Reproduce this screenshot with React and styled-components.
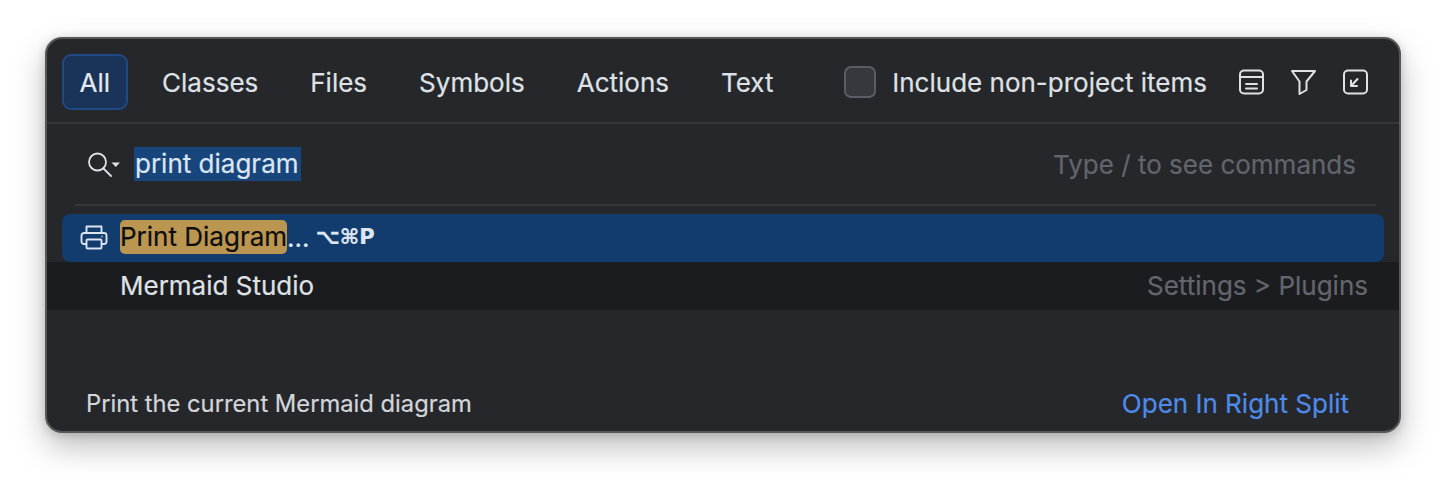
import React from 'react';
import styled, { createGlobalStyle } from 'styled-components';

const GlobalStyle = createGlobalStyle`
    html, body {
        margin: 0;
        background: #fff;
    }
    body {
        font-family: Inter, "Liberation Sans", sans-serif;
    }
`

const Page = styled.div`
    width: 1446px;
    height: 486px;
    box-sizing: border-box;
    padding: 37px 45px 53px;
    overflow: hidden;
`

const Popup = styled.div`
    height: 396px;
    box-sizing: border-box;
    display: flex;
    flex-direction: column;
    background: #25272b;
    border: 2px solid #56575a;
    border-radius: 17px;
    box-shadow: 0 14px 32px rgba(0, 0, 0, 0.26), 0 2px 10px rgba(0, 0, 0, 0.16);
    color: #dfe1e5;
    font-size: 26px;
    -webkit-text-stroke: 0.2px currentColor;
    overflow: hidden;
`

const TabBar = styled.div`
    height: 85px;
    flex: none;
    box-sizing: border-box;
    display: flex;
    align-items: center;
    padding: 3px 31px 0 15px;
    border-bottom: 2px solid #35373b;
`

const Tab = styled.div`
    height: 56px;
    box-sizing: border-box;
    display: flex;
    align-items: center;
    padding: 0 15.5px;
    margin-right: 17px;
    border-radius: 9px;
    border: 2px solid ${p => (p.$active ? '#1f4a86' : 'transparent')};
    background: ${p => (p.$active ? '#1a3358' : 'transparent')};
    color: ${p => (p.$active ? '#e6e8ec' : '#dfe1e5')};
`

const CheckBox = styled.div`
    width: 32px;
    height: 32px;
    box-sizing: border-box;
    margin-left: auto;
    border: 2px solid #5a5d63;
    border-radius: 7px;
    background: #36383d;
`

const CheckLabel = styled.span`
    margin-left: 16px;
    margin-right: 32px;
`

const IconGroup = styled.div`
    display: flex;
    align-items: center;
    gap: 27px;
`

const ToolIcon = styled.svg`
    width: 25px;
    height: 26px;
    fill: none;
    stroke: #dfe1e5;
    stroke-width: 2;
    stroke-linejoin: round;
    stroke-linecap: round;
`

const SearchRow = styled.div`
    height: 80px;
    flex: none;
    box-sizing: border-box;
    display: flex;
    align-items: center;
    padding: 0 43px 0 41px;
`

const SearchIcon = styled.svg`
    width: 32px;
    height: 26px;
    margin-right: 14px;
    fill: none;
    stroke: #dfe1e5;
    stroke-width: 1.8;
    stroke-linecap: round;
`

const Query = styled.span`
    height: 34px;
    line-height: 34px;
    padding: 0 2px 0 1px;
    background: #17457c;
    color: #dce6f2;
`

const Hint = styled.span`
    margin-left: auto;
    color: #62656b;
`

const Rule = styled.div`
    height: 2px;
    flex: none;
    margin: 0 23px 0 28px;
    background: #35373b;
`

const Results = styled.div`
    padding-top: 8px;
    display: flex;
    flex-direction: column;
`

const SelectedRow = styled.div`
    height: 48px;
    margin: 0 15px;
    box-sizing: border-box;
    display: flex;
    align-items: center;
    padding: 0 0 2px 18px;
    border-radius: 8px;
    background: #123b6e;
    color: #dfe6f0;
`

const PrinterIcon = styled.svg`
    width: 28px;
    height: 26px;
    margin-right: 12px;
    fill: none;
    stroke: #dce4ee;
    stroke-width: 1.9;
    stroke-linejoin: round;
`

const Match = styled.span`
    height: 34px;
    line-height: 34px;
    border-radius: 5px;
    background: #bb9650;
    color: #0d0d0d;
`

const Shortcut = styled.span`
    margin-left: 6px;
    font-family: "DejaVu Sans", sans-serif;
    font-size: 21px;
    font-weight: 700;
`

const PluginRow = styled.div`
    height: 48px;
    box-sizing: border-box;
    display: flex;
    align-items: center;
    justify-content: space-between;
    padding: 0 31px 2px 73px;
    background: #1b1c1f;
`

const Location = styled.span`
    color: #63666c;
`

const Footer = styled.div`
    margin-top: auto;
    height: 56px;
    flex: none;
    box-sizing: border-box;
    display: flex;
    align-items: center;
    justify-content: space-between;
    padding: 0 50px 0 39px;
`

const Description = styled.span`
    font-size: 23.75px;
    color: #d3d5da;
`

const OpenLink = styled.span`
    color: #4f8be8;
`

const tabs = ['All', 'Classes', 'Files', 'Symbols', 'Actions', 'Text'];

const App = () => {
    return (
        <Page>
            <GlobalStyle />
            <Popup>
                <TabBar>
                    {tabs.map((t, i) => (
                        <Tab key={t} $active={i === 0}>{t}</Tab>
                    ))}
                    <CheckBox />
                    <CheckLabel>Include non-project items</CheckLabel>
                    <IconGroup>
                        <ToolIcon viewBox="0 0 25 26">
                            <rect x="1" y="1.5" width="23" height="23" rx="4" />
                            <path d="M1 8h23M7 15h11M7 19.5h11" />
                        </ToolIcon>
                        <ToolIcon viewBox="0 0 25 26">
                            <path d="M1 2h23l-8.5 10.5V21l-7 4V12.5z" />
                        </ToolIcon>
                        <ToolIcon viewBox="0 0 25 26">
                            <rect x="1" y="1.5" width="23" height="23" rx="4" />
                            <path d="M14.5 10L8 17M8 11.5V17h6" />
                        </ToolIcon>
                    </IconGroup>
                </TabBar>
                <SearchRow>
                    <SearchIcon viewBox="0 0 32 26">
                        <circle cx="9.5" cy="11" r="8.5" />
                        <path d="M15.5 17.5L23 25" />
                        <path d="M23.5 11.5h8.5l-4.25 4.5z" fill="#dfe1e5" stroke="none" />
                    </SearchIcon>
                    <Query>print diagram</Query>
                    <Hint>Type / to see commands</Hint>
                </SearchRow>
                <Rule />
                <Results>
                    <SelectedRow>
                        <PrinterIcon viewBox="0 0 28 26">
                            <path d="M6.5 9V2.5h15V9" />
                            <path d="M6.5 20H4a2.5 2.5 0 0 1-2.5-2.5v-6A2.5 2.5 0 0 1 4 9h20a2.5 2.5 0 0 1 2.5 2.5v6A2.5 2.5 0 0 1 24 20h-2.5" />
                            <rect x="6.5" y="15.5" width="15" height="9" rx="1" />
                            <path d="M21.5 12.5h1" />
                        </PrinterIcon>
                        <Match>Print Diagram</Match>
                        <span>...</span>
                        <Shortcut>⌥⌘P</Shortcut>
                    </SelectedRow>
                    <PluginRow>
                        <span>Mermaid Studio</span>
                        <Location>Settings &gt; Plugins</Location>
                    </PluginRow>
                </Results>
                <Footer>
                    <Description>Print the current Mermaid diagram</Description>
                    <OpenLink>Open In Right Split</OpenLink>
                </Footer>
            </Popup>
        </Page>
    )
}

export default App
